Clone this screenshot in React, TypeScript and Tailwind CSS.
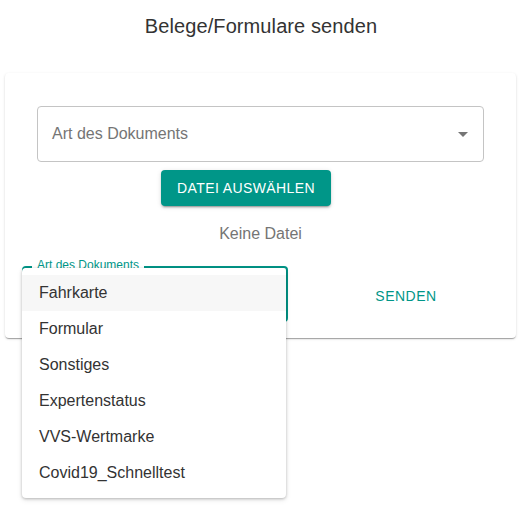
import { useState } from 'react';

const options = [
  'Fahrkarte',
  'Formular',
  'Sonstiges',
  'Expertenstatus',
  'VVS-Wertmarke',
  'Covid19_Schnelltest',
];

function CaretDown() {
  return (
    <svg width="10" height="5" viewBox="0 0 10 5" className="fill-[#757575]">
      <path d="M0 0h10L5 5z" />
    </svg>
  );
}

export default function App() {
  const [active] = useState(0);

  return (
    <div className="min-h-[505px] w-[522px] bg-white font-['Liberation_Sans',Arial,sans-serif]">
      <h1 className="pt-[13px] text-center text-[20px] leading-[26px] tracking-[0.1px] text-[#333]">
        Belege/Formulare senden
      </h1>

      <div className="mx-[5px] mt-[34px] w-[511px] rounded-[4px] bg-white px-[17px] pb-[16px] pt-[33px] shadow-[0_2px_1px_-1px_rgba(0,0,0,0.2),0_1px_1px_0_rgba(0,0,0,0.14),0_1px_3px_0_rgba(0,0,0,0.12)]">
        <div className="mx-[15px] flex h-[56px] items-center justify-between rounded-[4px] border border-[#c4c4c4] pl-[14px] pr-[15px]">
          <span className="text-[16px] text-[#757575]">Art des Dokuments</span>
          <CaretDown />
        </div>

        <div className="mt-[8px] flex">
          <button
            type="button"
            className="ml-[139px] h-[36px] w-[170px] rounded-[4px] bg-[#009688] text-[14px] uppercase tracking-[0.4px] text-white shadow-[0_3px_1px_-2px_rgba(0,0,0,0.2),0_2px_2px_0_rgba(0,0,0,0.14),0_1px_5px_0_rgba(0,0,0,0.12)]"
          >
            Datei auswählen
          </button>
        </div>

        <p className="mt-[18px] text-center text-[16px] leading-[20px] text-[#757575]">Keine Datei</p>

        <div className="mt-[22px] flex items-center">
          <div className="relative h-[56px] w-[266px] shrink-0">
            <div className="absolute inset-0 rounded-[4px] border-2 border-[#009688]" />
            <span className="absolute left-[10px] top-[-8px] bg-white px-[5px] text-[12px] leading-[14px] text-[#009688]">
              Art des Dokuments
            </span>

            <ul className="absolute left-0 top-[2px] z-10 w-[264px] rounded-[4px] bg-white py-[7px] shadow-[0_1px_3px_0_rgba(0,0,0,0.25),0_2px_6px_0_rgba(0,0,0,0.08)]">
              {options.map((o, i) => (
                <li
                  key={o}
                  className={
                    'flex h-[36px] items-center px-[17px] text-[16px] text-[#333] ' +
                    (i === active ? 'bg-[#f7f7f7]' : '')
                  }
                >
                  {o}
                </li>
              ))}
            </ul>
          </div>

          <div className="flex flex-1 justify-center pl-[25px] pt-[4px]">
            <button type="button" className="text-[14px] uppercase tracking-[0.5px] text-[#009688]">
              Senden
            </button>
          </div>
        </div>
      </div>
    </div>
  );
}
